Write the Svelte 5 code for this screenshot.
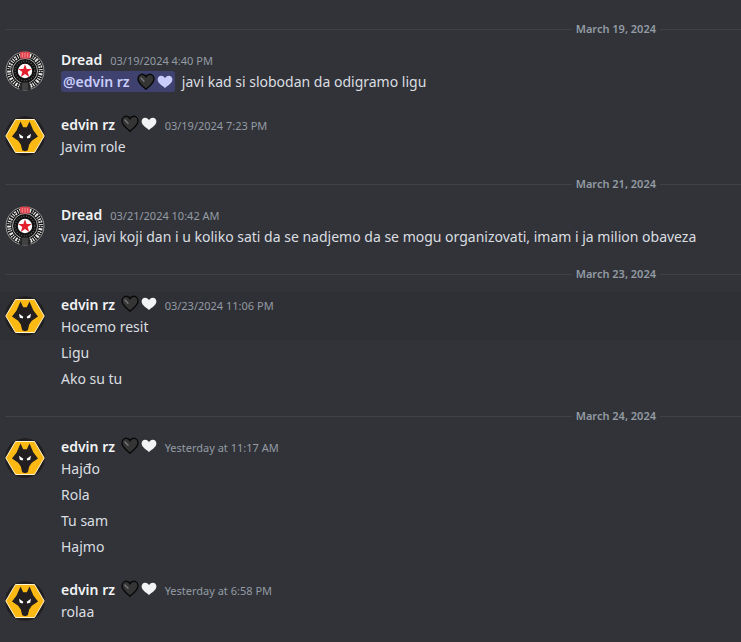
<script lang="ts">
  type Message = { author: string; time: string; mention?: boolean; hovered?: boolean; lines: string[] };
  type Day = { date: string; messages: Message[] };

  const days: Day[] = [
    {
      date: 'March 19, 2024',
      messages: [
        { author: 'Dread', time: '03/19/2024 4:40 PM', mention: true, lines: ['javi kad si slobodan da odigramo ligu'] },
        { author: 'edvin rz', time: '03/19/2024 7:23 PM', lines: ['Javim role'] }
      ]
    },
    {
      date: 'March 21, 2024',
      messages: [
        {
          author: 'Dread',
          time: '03/21/2024 10:42 AM',
          lines: ['vazi, javi koji dan i u koliko sati da se nadjemo da se mogu organizovati, imam i ja milion obaveza']
        }
      ]
    },
    {
      date: 'March 23, 2024',
      messages: [
        { author: 'edvin rz', time: '03/23/2024 11:06 PM', hovered: true, lines: ['Hocemo resit', 'Ligu', 'Ako su tu'] }
      ]
    },
    {
      date: 'March 24, 2024',
      messages: [
        { author: 'edvin rz', time: 'Yesterday at 11:17 AM', lines: ['Hajđo', 'Rola', 'Tu sam', 'Hajmo'] },
        { author: 'edvin rz', time: 'Yesterday at 6:58 PM', lines: ['rolaa'] }
      ]
    }
  ];
</script>

{#snippet hearts()}
  <svg class="hearts" viewBox="0 0 36 18" aria-hidden="true">
    <path d="M9 16.2C6.500 13.800 1 10.500 1 6C1 3.300 2.900 1.300 5.200 1.300C6.900 1.300 8.300 2.200 9 3.600C9.700 2.200 11.100 1.300 12.800 1.300C15.100 1.300 17 3.300 17 6C17 10.500 11.500 13.800 9 16.200Z" fill="#353535" stroke="#090909" stroke-width="1.400" />
    <path d="M4 5L7 8.300" stroke="#777" stroke-width="1.400" stroke-linecap="round" />
    <path d="M28 15C26 13 20.600 10.300 20.600 6.500C20.600 4.200 22.200 2.800 24.100 2.800C26 2.800 27.300 3.900 28 5.200C28.700 3.900 30 2.800 31.900 2.800C33.800 2.800 35.400 4.200 35.400 6.500C35.400 10.300 30 13 28 15Z" fill="currentColor" />
  </svg>
{/snippet}

{#snippet crest()}
  <svg class="avatar" viewBox="0 0 40 40" aria-hidden="true">
    <circle cx="20" cy="20" r="19.500" fill="#111" />
    <circle cx="20" cy="20" r="19" fill="none" stroke="#b5b5b5" stroke-width="0.900" />
    <circle cx="20" cy="20" r="15.800" fill="none" stroke="#e8e8e8" stroke-width="4" stroke-dasharray="1.200 1 2 1.300 1 1.100" />
    <circle cx="20" cy="20" r="15.800" fill="none" stroke="#111" stroke-width="1" stroke-dasharray="2 4 1.500 5" />
    <circle cx="20" cy="20" r="12.500" fill="#111" stroke="#c4c4c4" stroke-width="0.900" />
    <circle cx="20" cy="20" r="9.800" fill="none" stroke="#666" stroke-width="1.200" stroke-dasharray="1 1.600" />
    <circle cx="20" cy="20" r="7.200" fill="#fff" />
    <path d="M20 13.200L21.700 17.900H26.700L22.700 21L24.200 25.900L20 22.900L15.800 25.900L17.300 21L13.300 17.900H18.300Z" fill="#e31e2d" />
    <path d="M14.800 1.500L17.500 0.300L20 1.300L22.500 0.300L25.200 1.500L24.600 7.500H15.400Z" fill="#e0414b" />
    <path d="M17.300 2V6.500M20 2V6.500M22.700 2V6.500" stroke="#f4a3a7" stroke-width="0.800" />
    <path d="M16 31H24L25.500 39H14.500Z" fill="#252525" />
    <path d="M18 32V39M20 32V39M22 32V39" stroke="#777" stroke-width="0.700" />
  </svg>
{/snippet}

{#snippet wolf()}
  <svg class="avatar" viewBox="0 0 40 40" aria-hidden="true">
    <circle cx="20" cy="20" r="20" fill="#211f20" />
    <path d="M10.500 3.500H29.500L39.200 20L29.500 36.500H10.500L0.800 20Z" fill="#fdb913" stroke="#fff3cf" stroke-width="1" />
    <path d="M15.500 5.500L18.200 11.200H21.800L24.500 5.500L28.400 14.500L33 20.500L26.800 24.700L24.200 28.600L22.800 34.300L20 35.200L17.200 34.300L15.800 28.600L13.200 24.700L7 20.500L11.600 14.500Z" fill="#231f20" />
    <path d="M14 17.700L18.300 20.800L17.700 22.600L14.800 21.800ZM26 17.700L21.700 20.800L22.300 22.600L25.200 21.800Z" fill="#fff" />
  </svg>
{/snippet}

<main class="chat">
  {#each days as day}
    <div class="divider" role="separator" aria-label={day.date}>
      <span>{day.date}</span>
    </div>
    {#each day.messages as message}
      <article class="group">
        {#each message.lines as line, i}
          <div class="row" class:hovered={message.hovered && i === 0}>
            <div class="gutter">
              {#if i === 0}
                {#if message.author === 'Dread'}{@render crest()}{:else}{@render wolf()}{/if}
              {/if}
            </div>
            <div class="content">
              {#if i === 0}
                <header>
                  <h3>
                    {message.author}
                    {#if message.author !== 'Dread'}{@render hearts()}{/if}
                  </h3>
                  <time>{message.time}</time>
                </header>
              {/if}
              <p>
                {#if message.mention}
                  <span class="mention">@edvin rz {@render hearts()}</span>
                {/if}
                {line}
              </p>
            </div>
          </div>
        {/each}
      </article>
    {/each}
  {/each}
</main>

<style>
  :global(body) {
    margin: 0;
    background: #313338;
  }
  .chat {
    padding: 5px 0 14px;
    overflow: hidden;
    color: #dbdee1;
    font-family: 'Noto Sans', sans-serif;
    font-size: 14px;
    line-height: 22px;
  }
  .divider {
    display: flex;
    align-items: center;
    gap: 4px;
    height: 1px;
    margin: 24px 0 17px 5px;
    color: #949ba4;
    font-size: 11px;
    font-weight: 600;
    line-height: 13px;
  }
  .divider span {
    padding-bottom: 2px;
  }
  .divider::before,
  .divider::after {
    content: '';
    height: 1px;
    background: #3f4147;
  }
  .divider::before {
    flex: 1;
  }
  .divider::after {
    width: 81px;
  }
  .group + .group {
    margin-top: 17px;
  }
  .row {
    display: flex;
    gap: 16px;
    padding: 2px 0 2px 5px;
  }
  .hovered {
    background: #2e3035;
  }
  .gutter {
    flex: none;
    width: 40px;
  }
  .avatar {
    display: block;
    width: 40px;
    height: 40px;
    margin-top: 2px;
    border-radius: 50%;
  }
  .content {
    flex: 1;
    min-width: 0;
  }
  header {
    display: flex;
    align-items: baseline;
    gap: 8px;
    height: 22px;
  }
  h3 {
    margin: 0;
    color: #f2f3f5;
    font-size: 14px;
    font-weight: 600;
  }
  time {
    color: #949ba4;
    font-size: 11px;
  }
  p {
    margin: 0;
  }
  .hearts {
    width: 36px;
    height: 18px;
    margin-left: 2px;
    vertical-align: -3px;
  }
  .mention {
    display: inline-block;
    margin-right: 3px;
    padding: 0 2px;
    border-radius: 3px;
    background: #3f426f;
    color: #c9cdfb;
    font-weight: 600;
    line-height: 21px;
  }
  .mention .hearts {
    margin-left: 4px;
    vertical-align: -4px;
  }
</style>
